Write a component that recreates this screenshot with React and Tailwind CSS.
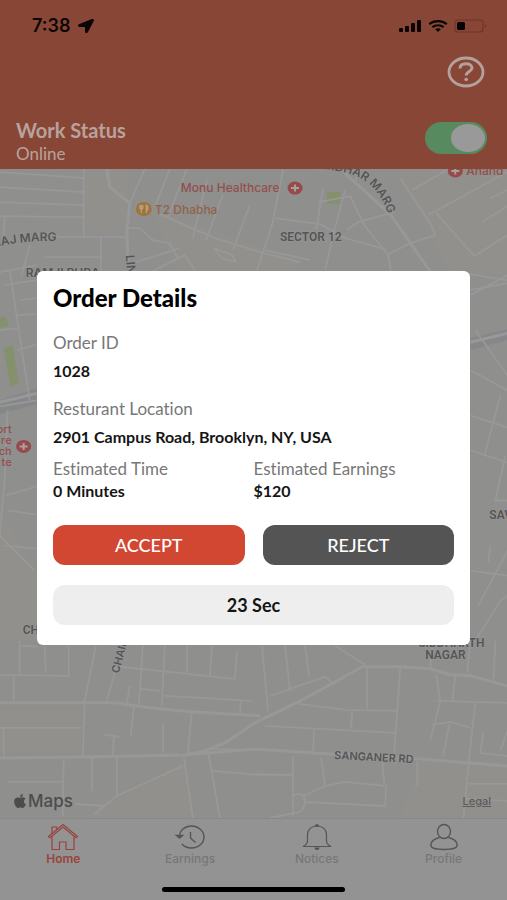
import React, { useState } from "react";
import { FaApple, FaLocationArrow } from "react-icons/fa";

function SignalIcon() {
  return (
    <svg width="23" height="12" viewBox="0 0 23 12" fill="currentColor" aria-hidden="true">
      <rect x="0" y="8" width="4" height="4" rx="1" />
      <rect x="6" y="6" width="4" height="6" rx="1" />
      <rect x="12" y="3" width="4" height="9" rx="1" />
      <rect x="18" y="0" width="4" height="12" rx="1" />
    </svg>
  );
}

function WifiIcon() {
  return (
    <svg
      width="20"
      height="12"
      viewBox="0 0 20 12"
      fill="none"
      stroke="currentColor"
      strokeWidth="2.2"
      aria-hidden="true"
    >
      <path d="M1.2 4.2C6 .1 14 .1 18.8 4.2" />
      <path d="M4.4 7.2c3.3-2.6 7.9-2.6 11.2 0" />
      <path d="M7.2 9.2c1.6-1.2 4-1.2 5.6 0L10 12z" fill="currentColor" stroke="none" />
    </svg>
  );
}

function BatteryIcon() {
  return (
    <svg width="33" height="14" viewBox="0 0 33 14" fill="none" aria-hidden="true">
      <rect x="1" y="1" width="28" height="12" rx="3" stroke="#74322a" strokeWidth="1.2" />
      <path d="M31 5c1.6.6 1.6 3.4 0 4z" fill="#74322a" />
      <rect x="3" y="3" width="8" height="8" rx="1.5" fill="#050303" />
    </svg>
  );
}

function HelpIcon() {
  return (
    <svg width="38" height="32" viewBox="0 0 38 32" fill="none" stroke="#b5a19b" aria-hidden="true">
      <ellipse cx="19" cy="16" rx="17" ry="14" strokeWidth="2.8" />
      <path
        d="M13 12.5C13 9.5 15.5 7.8 19 7.8s6 1.7 6 4.2c0 3.6-5.8 3.4-5.8 7.5"
        strokeWidth="3"
      />
      <ellipse cx="19.2" cy="23.4" rx="1.9" ry="1.6" fill="#b5a19b" stroke="none" />
    </svg>
  );
}

function HomeIcon() {
  return (
    <svg
      width="32"
      height="28"
      viewBox="0 0 32 28"
      fill="none"
      stroke="currentColor"
      strokeWidth="1.2"
      aria-hidden="true"
    >
      <path d="M1.5 13.5 16 1.5l14.5 12-1.5 1.2L16 4 3 14.7z" />
      <path d="M5 13v13.5h7.5V19H19v7.5h8V13" />
      <path d="M5 10.5V4h4.5v3" />
    </svg>
  );
}

function HistoryIcon() {
  return (
    <svg
      width="32"
      height="26"
      viewBox="0 0 32 26"
      fill="none"
      stroke="currentColor"
      strokeWidth="1.4"
      aria-hidden="true"
    >
      <path d="M5.5 13C5.5 6.5 10.8 2 17.5 2S30 6.800 30 13s-5.500 11-12.500 11c-4 0-7.400-1.500-9.700-4" />
      <path d="M2.500 11.500h6l-3 2.500z" fill="currentColor" />
      <path d="M16.5 8v6l5 4.5" />
    </svg>
  );
}

function BellIcon() {
  return (
    <svg
      width="32"
      height="28"
      viewBox="0 0 32 28"
      fill="none"
      stroke="currentColor"
      strokeWidth="1.2"
      aria-hidden="true"
    >
      <path d="M2 23.5c2.500-1.200 4.500-3 4.500-5.500v-6.500C6.500 6.500 10.500 3 16 3s9.500 3.500 9.500 8.500V18c0 2.500 2 4.300 4.500 5.500z" />
      <path d="M14.5 2.8C15 1.500 17 1.500 17.500 2.800zM14 25c.4 2 3.600 2 4 0z" fill="currentColor" />
    </svg>
  );
}

function ProfileIcon() {
  return (
    <svg
      width="32"
      height="28"
      viewBox="0 0 32 28"
      fill="none"
      stroke="currentColor"
      strokeWidth="1.4"
      aria-hidden="true"
    >
      <ellipse cx="16" cy="8.5" rx="6.5" ry="7" />
      <path d="M11.5 14.500C6 16 2.800 19 2.800 22c0 3.500 5 4.500 13.200 4.500s13.200-1 13.200-4.500c0-3-3.200-6-8.700-7.500" />
    </svg>
  );
}

function HealthPin({ x, y }) {
  return (
    <g>
      <ellipse cx={x} cy={y} rx="7.5" ry="6.5" fill="#964a4c" />
      <path
        d={`M${x - 4} ${y}h8M${x} ${y - 3.5}v7`}
        stroke="#aaa19d"
        strokeWidth="2"
      />
    </g>
  );
}

const mainRoads = [
  "M0 702 L60 702 L115 702 L150 707 L190 711 L260 715",
  "M0 757 L85 756 L185 754 L205 750 L225 742 L255 722 L300 700 L330 684 L362 666 L400 666 L430 668 L450 674 L470 675 L507 685",
  "M185 754 L255 748 L330 753 L420 758 L507 765",
  "M340 169 L390 214 L415 250 L450 300",
  "M107 169 L110 187 L130 203 L127 230 L128 260 L134 280",
  "M0 402 L37 393",
  "M470 342 L507 333",
];

const streets = [
  "M0 172 L84 178 M0 187 L84 192 M0 202 L84 205 M0 216 L84 217 M84 169 L84 236",
  "M57 237 L125 237 M45 257 L101 257 M101 237 L101 275 M5 217 L3 245 M30 245 L22 275",
  "M145 169 L130 203 M170 169 L155 207 M187 169 L168 217 M207 180 L193 238 M223 195 L206 240",
  "M127 228 L140 228 L153 240 L170 243 L178 258 M136 262 L180 248 M145 275 L185 255 L195 270",
  "M160 214 L215 238 L260 252 L300 262 M250 205 L233 250 M214 248 L222 258 L236 262 L232 255 L214 248",
  "M283 170 L272 225 L257 270 M275 218 L320 224 L345 238 L385 249 M345 190 L333 235 L325 270",
  "M318 202 L350 196 L364 225 L388 255 L392 280 M347 230 L358 222 L394 212",
  "M388 254 L410 243 L435 235 L431 225 L400 178 M412 190 L450 168 M428 215 L507 172",
  "M436 213 L474 256 L507 235 M482 222 L507 206 M450 271 L507 280",
  "M323 188 L316 230 M360 169 L355 182 M265 250 L310 260 M490 198 L507 190",
  "M0 272 L37 265 M10 270 L30 400 M5 285 L37 280 M20 300 L37 298 M18 315 L37 314 M0 330 L20 328 M17 350 L37 344",
  "M8 410 L5 480 L0 535 L35 570 M6 495 L37 486 M8 510 L37 514 M5 545 L37 548 M0 406 L37 400",
  "M470 290 L507 283 M470 295 L507 275 M475 330 L507 375 M470 370 L507 390 M500 395 L484 455 M470 450 L507 462",
  "M505 455 L495 500 L507 500 M470 415 L507 427 M490 545 L488 562 M470 570 L507 575 M475 640 L500 600 L507 595 M478 605 L507 550",
  "M0 674 L69 675 L69 645 M20 640 L20 675 M14 675 L14 700 M45 645 L46 672 M22 645 L38 646",
  "M96 645 L85 700 L83 757 M117 665 L107 700 M143 645 L139 704 M165 645 L162 705 M120 666 L235 678 L237 650",
  "M187 645 L187 672 M212 645 L210 676 M130 685 L127 702 M140 688 L160 690 M165 695 L252 700 M241 700 L240 712",
  "M0 727 L82 727 M4 727 L4 757 M134 706 L131 735 M192 710 L188 752 M163 722 L163 752 M105 734 L120 736 M114 736 L113 755",
  "M64 757 L63 815 M92 757 L92 790 M117 757 L117 795 M8 781 L63 781 M95 813 L117 795 L183 765 M75 803 L105 805",
  "M184 757 L193 817 M208 750 L220 817 M212 770 L258 774 L292 774 M212 748 L260 749",
  "M262 645 L268 710 M285 645 L290 690 M305 645 L309 675 M270 695 L325 676 L335 684 M335 645 L365 664",
  "M367 668 L367 708 M298 703 L345 709 L397 710 M352 709 L351 728 M265 725 L320 728 L395 732 M314 728 L313 750",
  "M400 668 L397 710 L394 752 M436 674 L440 700 L430 740 M436 700 L507 702 M455 675 L452 700 M475 702 L468 765 L463 817",
  "M431 724 L450 721 L470 727 M449 723 L443 755 M483 732 L480 752 L507 755 M507 730 L500 750 M417 760 L417 785",
  "M293 755 L293 815 M250 773 L291 774 M321 757 L325 785 L345 781 L386 785 L385 805 L305 801 L303 795 L325 785",
  "M293 795 Q300 790 305 797 Q306 805 300 811 L270 817",
  "M468 783 L507 783 M432 645 L430 668 M495 640 L493 682 M470 640 L467 672 M382 757 L384 782 M465 798 L507 800",
];

function MapView() {
  return (
    <svg
      className="absolute inset-0 h-full w-full"
      viewBox="0 169 507 648"
      preserveAspectRatio="xMidYMid slice"
      role="img"
      aria-label="Map"
    >
      <rect y="169" width="507" height="648" fill="#8f8f8e" />
      <path
        d="M85 169H130L126 230L85 236ZM150 208L300 262L290 275H180ZM395 169L507 169V275H450ZM0 510L37 570V640H0ZM120 790L185 765L192 817H85ZM420 760H507V817H400ZM0 710H82V750H0Z"
        fill="#91908c"
      />
      <path d="M0 400L37 388V404L0 414ZM470 338L507 329V340L470 350Z" fill="#858789" />
      <path d="M0 317l6 0 3 8-9 3ZM4 348l9-3 6 38-8 4ZM327 192h13v12h-13Z" fill="#85906c" />
      <g fill="none" stroke="#989898" strokeLinejoin="round">
        {streets.map((d) => (
          <path key={d} d={d} strokeWidth="1.8" />
        ))}
        {mainRoads.map((d) => (
          <path key={d} d={d} strokeWidth="3" />
        ))}
      </g>

      <path id="marg" d="M300 168 C346 169 362 176 374 189 Q383 200 388 214" fill="none" />
      <path id="aj" d="M-20 252 Q12 240 57 241" fill="none" />
      <g fill="#555" stroke="#999" strokeWidth="1" paintOrder="stroke">
        <g
          className="font-[Inter,'Liberation_Sans',sans-serif] font-semibold"
          fontSize="12"
        >
          <text textAnchor="end">
            <textPath href="#marg" startOffset="100%">
              GIRDHAR MARG
            </textPath>
          </text>
          <text textAnchor="end">
            <textPath href="#aj" startOffset="100%">
              MAJ MARG
            </textPath>
          </text>
          <text x="26" y="277">RAMJI PURA</text>
          <text transform="translate(126 255) rotate(86)">LINK RD</text>
          <g fontSize="11">
            <text transform="translate(119 673) rotate(-75)">CHAIN</text>
            <text transform="translate(334 758) rotate(3)">SANGANER RD</text>
          </g>
        </g>
        <g
          className="font-[Roboto,'Liberation_Sans',sans-serif] font-semibold"
          fontSize="12"
        >
          <text x="280" y="241">SECTOR 12</text>
          <text x="489" y="518">SAV</text>
          <text x="23" y="633">CH</text>
          <text x="418" y="646">SIDDHARTH</text>
          <text x="425" y="658">NAGAR</text>
        </g>
      </g>

      <g
        className="font-[Inter,'Liberation_Sans',sans-serif] font-medium"
        fill="#934f4f"
        fontSize="12"
      >
        <text x="181" y="192">Monu Healthcare</text>
        <text x="466" y="175">Anand</text>
        <g fontSize="11" textAnchor="end">
          <text x="12" y="433">ort</text>
          <text x="12" y="444">re</text>
          <text x="12" y="455">ch</text>
          <text x="12" y="466">te</text>
        </g>
        <text x="155" y="214" fill="#91634a">T2 Dhabha</text>
      </g>
      <HealthPin x={295} y={188} />
      <HealthPin x={455} y={171} />
      <HealthPin x={24} y={446} />
      <ellipse cx="144" cy="209" rx="8" ry="7" fill="#a2743a" />
      <path
        d="M140 205v3q1.500 2 3 0v-3M141.500 205v8M146.500 213v-8q2.500 2 1 5h-1"
        fill="none"
        stroke="#b0a593"
        strokeWidth="1.2"
      />
    </svg>
  );
}

function Header() {
  const [online, setOnline] = useState(true);

  return (
    <header className="bg-[#884636] px-4 pb-[3px] text-[#b8a39c]">
      <div className="flex h-[52px] items-center justify-between pr-1 pl-4 text-[#0b0605]">
        <div className="flex items-center gap-2">
          <span className="font-[Inter,'Liberation_Sans',sans-serif] text-lg font-semibold">7:38</span>
          <FaLocationArrow className="h-3.5 w-4" preserveAspectRatio="none" />
        </div>
        <div className="flex items-center gap-1.5">
          <SignalIcon />
          <WifiIcon />
          <BatteryIcon />
        </div>
      </div>

      <div className="flex justify-end pt-1 pr-1.5">
        <button aria-label="Help">
          <HelpIcon />
        </button>
      </div>

      <div className="mt-7 flex items-start justify-between">
        <div className="pt-0.5">
          <h1 className="text-xl leading-6 font-bold">Work Status</h1>
          <p className="text-[17px] leading-6">{online ? "Online" : "Offline"}</p>
        </div>
        <label className="mt-1.5 mr-1 block cursor-pointer">
          <input
            type="checkbox"
            role="switch"
            aria-label="Work status"
            className="peer sr-only"
            checked={online}
            onChange={(e) => setOnline(e.target.checked)}
          />
          <span className="flex h-8 w-[62px] items-center rounded-full bg-[#777] p-0.5 peer-checked:justify-end peer-checked:bg-[#578a5e]">
            <span className="h-7 w-[34px] rounded-[50%] bg-[#999]" />
          </span>
        </label>
      </div>
    </header>
  );
}

const tabs = [
  { label: "Home", icon: HomeIcon, active: true },
  { label: "Earnings", icon: HistoryIcon },
  { label: "Notices", icon: BellIcon },
  { label: "Profile", icon: ProfileIcon },
];

function TabBar() {
  return (
    <nav className="border-t border-[#888] bg-[#939393] pb-2 font-[Inter,'Liberation_Sans',sans-serif]">
      <div className="grid grid-cols-4">
        {tabs.map(({ label, icon: Icon, active }) => (
          <a
            key={label}
            href="#"
            className={
              active
                ? "flex flex-col items-center pt-1 text-xs font-semibold text-[#98433c]"
                : "flex flex-col items-center pt-1 text-xs font-medium text-[#777]"
            }
          >
            <span className={active ? "flex h-7 items-center" : "flex h-7 items-center text-[#555]"}>
              <Icon />
            </span>
            {label}
          </a>
        ))}
      </div>
      <div className="mx-auto mt-5 h-[5px] w-[36%] rounded-full bg-black" />
    </nav>
  );
}

function OrderModal() {
  return (
    <div className="absolute inset-0 flex items-center justify-center px-[37px] pt-4">
      <section
        role="dialog"
        aria-labelledby="order-title"
        className="w-full max-w-md rounded-md bg-white px-4 pt-3 pb-5 text-base leading-5 text-[#151515] [font-variant-ligatures:none]"
      >
        <h2 id="order-title" className="text-2xl leading-[30px] font-black text-black">
          Order Details
        </h2>

        <dl>
          <dt className="mt-5 text-[17px] text-[#777]">Order ID</dt>
          <dd className="mt-2 font-bold">1028</dd>
          <dt className="mt-[18px] text-[17px] text-[#777]">Resturant Location</dt>
          <dd className="mt-2 font-bold">2901 Campus Road, Brooklyn, NY, USA</dd>
        </dl>

        <dl className="mt-3 grid grid-cols-2">
          <div>
            <dt className="text-[17px] text-[#777]">Estimated Time</dt>
            <dd className="mt-0.5 font-bold">0 Minutes</dd>
          </div>
          <div>
            <dt className="text-[17px] text-[#777]">Estimated Earnings</dt>
            <dd className="mt-0.5 font-bold">$120</dd>
          </div>
        </dl>

        <div className="mt-6 grid grid-cols-2 gap-[18px]">
          <button className="h-10 rounded-xl bg-[#d14732] text-lg font-medium text-white">
            ACCEPT
          </button>
          <button className="h-10 rounded-xl bg-[#545454] text-lg font-medium text-white">
            REJECT
          </button>
        </div>

        <div className="mt-5 flex h-10 items-center justify-center rounded-xl bg-[#eeeeee] text-lg font-bold">
          23 Sec
        </div>
      </section>
    </div>
  );
}

export default function App() {
  return (
    <div className="relative flex min-h-screen flex-col font-[Lato,'Liberation_Sans',sans-serif]">
      <Header />
      <main className="relative flex-1 overflow-hidden">
        <MapView />
        <div className="absolute inset-x-0 bottom-0 flex items-center justify-between px-3 pb-1 font-[Inter,'Liberation_Sans',sans-serif] text-[#4c4c4c]">
          <span className="flex items-center text-[17px] font-medium">
            <FaApple className="h-4 w-4" />
            Maps
          </span>
          <a href="#" className="mr-1 text-[11px] font-medium text-[#5c5c5c] underline">
            Legal
          </a>
        </div>
      </main>
      <TabBar />
      <OrderModal />
    </div>
  );
}
